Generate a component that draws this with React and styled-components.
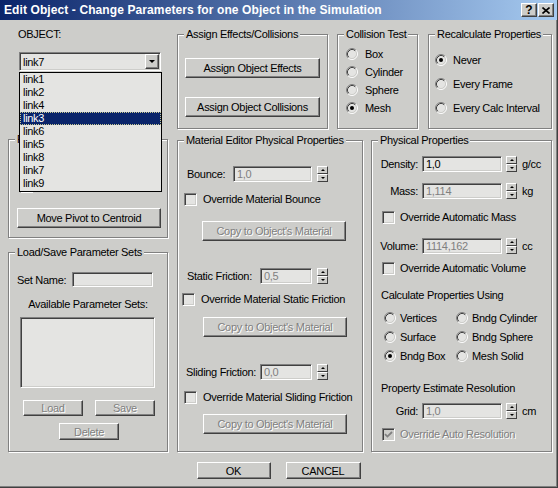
import React from 'react';
import styled, { createGlobalStyle } from 'styled-components';

const FACE = '#cdcdca';
const FIELD = '#e4e4e2';
const SHADOW = '#808080';
const DARK = '#404040';
const NAVY = '#0a246a';

const GlobalStyle = createGlobalStyle`
  html, body { margin: 0; padding: 0; background: ${FACE}; }
  body {
    font-family: "Liberation Sans", Arial, sans-serif;
    font-size: 11px;
    letter-spacing: -0.3px;
    color: #000;
  }
  * { box-sizing: border-box; }
`;

const Window = styled.div`
  width: 558px;
  height: 488px;
  background: ${FACE};
  border-right: 1px solid ${DARK};
  border-bottom: 1px solid ${DARK};
  box-shadow: inset -1px -1px ${SHADOW};
  display: flex;
  flex-direction: column;
  overflow: hidden;
`;

const TitleBar = styled.div`
  height: 20px;
  flex-shrink: 0;
  display: flex;
  align-items: center;
  padding: 0 3px 0 4px;
  background: linear-gradient(to right, ${NAVY}, #a6caf0);
`;

const Title = styled.div`
  flex: 1;
  color: #fff;
  font-weight: bold;
  font-size: 12px;
  letter-spacing: 0.1px;
  white-space: nowrap;
`;

const CaptionButtons = styled.div`
  display: flex;
  gap: 1px;
`;

const CaptionButton = styled.div`
  width: 16px;
  height: 14px;
  display: flex;
  align-items: center;
  justify-content: center;
  background: ${FACE};
  border: 1px solid;
  border-color: #fff ${DARK} ${DARK} #fff;
  box-shadow: inset -1px -1px ${SHADOW};
  font-weight: bold;
  font-size: 12px;
  letter-spacing: 0;
`;

const Body = styled.div`
  display: grid;
  grid-template-columns: 160px 375px;
  column-gap: 9px;
  padding: 8px 0 0 8px;
`;

const Column = styled.div`
  display: flex;
  flex-direction: column;
  align-items: flex-start;
`;

const GroupRow = styled.div`
  display: flex;
  align-items: flex-start;
  height: ${p => p.$h}px;
  margin-top: ${p => p.$mt || 0}px;
`;

const Group = styled.fieldset`
  margin: ${p => p.$mt || 0}px 0 0 ${p => p.$ml || 0}px;
  padding: 0;
  width: ${p => (p.$w ? `${p.$w}px` : '100%')};
  height: ${p => p.$h}px;
  min-width: 0;
  border: 1px solid ${SHADOW};
  box-shadow: inset 1px 1px #fff, 1px 1px #fff;
  display: flex;
  flex-direction: column;
  align-items: flex-start;
`;

const Legend = styled.legend`
  margin-left: 6px;
  padding: 0 2px;
  line-height: 13px;
  background: ${FACE};
  white-space: nowrap;
`;

const Text = styled.span`
  display: block;
  line-height: 13px;
  margin: ${p => p.$mt || 0}px 0 0 ${p => p.$ml || 0}px;
  white-space: nowrap;
  align-self: ${p => (p.$center ? 'stretch' : 'auto')};
  text-align: ${p => (p.$center ? 'center' : 'left')};
  ${p => p.$disabled && `color: ${SHADOW}; text-shadow: 1px 1px #fff;`}
`;

const Row = styled.div`
  display: flex;
  align-items: center;
  height: ${p => p.$h || 13}px;
  margin: ${p => p.$mt || 0}px 0 0 ${p => p.$ml || 0}px;
  gap: ${p => p.$gap || 0}px;
  white-space: nowrap;
`;

const FieldLabel = styled.span`
  flex-shrink: 0;
  width: ${p => p.$w}px;
  text-align: ${p => (p.$right ? 'right' : 'left')};
  white-space: nowrap;
`;

const Sunken = styled.div`
  flex-shrink: 0;
  width: ${p => p.$w}px;
  height: ${p => p.$h || 16}px;
  margin: ${p => p.$mt || 0}px 0 0 ${p => p.$ml || 0}px;
  background: ${FIELD};
  border: 1px solid;
  border-color: ${SHADOW} #fff #fff ${SHADOW};
  box-shadow: inset 1px 1px ${DARK}, inset -1px -1px ${FACE};
`;

const Field = styled(Sunken)`
  padding-left: 3px;
  line-height: ${p => (p.$h || 16) - 2}px;
  color: ${p => (p.$disabled ? SHADOW : '#000')};
  overflow: hidden;
  white-space: nowrap;
`;

const Spin = styled.div`
  flex-shrink: 0;
  display: flex;
  flex-direction: column;
  width: 11px;
  height: 16px;
  margin-left: ${p => p.$ml || 0}px;
`;

const SpinHalf = styled.div`
  flex: 1;
  display: flex;
  align-items: center;
  justify-content: center;
  background: ${FACE};
  border: 1px solid;
  border-color: #fff ${DARK} ${DARK} #fff;
`;

const Arrow = styled.span`
  width: 0;
  height: 0;
  border-left: ${p => p.$size || 3}px solid transparent;
  border-right: ${p => p.$size || 3}px solid transparent;
  ${p => (p.$up ? 'border-bottom' : 'border-top')}: ${p => p.$size || 3}px solid #000;
`;

const Button = styled.button`
  display: block;
  flex-shrink: 0;
  width: ${p => p.$w}px;
  height: ${p => p.$h || 20}px;
  margin: ${p => p.$mt || 0}px 0 0 ${p => p.$ml || 0}px;
  padding: 0;
  font: inherit;
  letter-spacing: inherit;
  color: #000;
  background: ${FACE};
  border: 1px solid;
  border-color: #fff ${DARK} ${DARK} #fff;
  box-shadow: inset -1px -1px ${SHADOW};
  white-space: nowrap;

  &:disabled {
    color: ${SHADOW};
    text-shadow: 1px 1px #fff;
  }
`;

const CheckBox = styled.span`
  flex-shrink: 0;
  display: flex;
  align-items: center;
  justify-content: center;
  width: 13px;
  height: 13px;
  background: ${p => (p.$disabled ? FACE : FIELD)};
  border: 1px solid;
  border-color: ${SHADOW} #fff #fff ${SHADOW};
  box-shadow: inset 1px 1px ${DARK}, inset -1px -1px ${FACE};
`;

const RadioIcon = styled.svg`
  flex-shrink: 0;
  display: block;
`;

const RadioGrid = styled.div`
  display: grid;
  grid-template-columns: 72px auto;
  grid-auto-rows: 13px;
  row-gap: 6px;
  margin: ${p => p.$mt || 0}px 0 0 ${p => p.$ml || 0}px;
`;

const ComboWrap = styled.div`
  position: relative;
  width: 142px;
  height: 19px;
  margin: 11px 0 0 11px;
`;

const Combo = styled(Sunken)`
  display: flex;
  align-items: center;
  padding-left: 3px;
`;

const ComboButton = styled.div`
  margin-left: auto;
  margin-right: 1px;
  width: 14px;
  height: 15px;
  display: flex;
  align-items: center;
  justify-content: center;
  background: ${FACE};
  border: 1px solid;
  border-color: #fff ${DARK} ${DARK} #fff;
  box-shadow: inset -1px -1px ${SHADOW};
`;

const DropList = styled.div`
  position: absolute;
  top: 20px;
  left: 0;
  z-index: 5;
  width: 143px;
  padding-bottom: 1px;
  background: ${FIELD};
  border: 1px solid #000;
`;

const DropItem = styled.div`
  height: 13px;
  line-height: 13px;
  padding-left: 3px;
  ${p =>
    p.$active &&
    `background: ${NAVY}; color: #fff; outline: 1px dotted #c8c890; outline-offset: -1px;`}
`;

const Footer = styled.div`
  display: flex;
  justify-content: center;
  gap: 15px;
  margin-top: 10px;
`;

const Radio = ({ checked }) => (
  <RadioIcon width="12" height="12" viewBox="0 0 12 12">
    <circle cx="6" cy="6" r="4.5" fill={FIELD} />
    <path d="M2.11 9.89A5.5 5.5 0 0 1 9.89 2.11" stroke={SHADOW} fill="none" />
    <path d="M9.89 2.11A5.5 5.5 0 0 1 2.11 9.89" stroke="#fff" fill="none" />
    <path d="M2.82 9.18A4.5 4.5 0 0 1 9.18 2.82" stroke={DARK} fill="none" />
    <path d="M9.18 2.82A4.5 4.5 0 0 1 2.82 9.18" stroke={FACE} fill="none" />
    {checked && <circle cx="6" cy="6" r="2" fill="#000" />}
  </RadioIcon>
);

const RadioOption = ({ checked, label, gap = 6, mt, ml }) => (
  <Row $gap={gap} $mt={mt} $ml={ml}>
    <Radio checked={checked} />
    <span>{label}</span>
  </Row>
);

const Check = ({ checked, disabled, label, gap = 6, mt, ml }) => (
  <Row $gap={gap} $mt={mt} $ml={ml}>
    <CheckBox $disabled={disabled}>
      {checked && (
        <svg width="9" height="9" viewBox="0 0 9 9">
          <path d="M1 4.2l2.4 2.4L8 2" stroke={disabled ? SHADOW : '#000'} strokeWidth="1.8" fill="none" />
        </svg>
      )}
    </CheckBox>
    <Text $disabled={disabled}>{label}</Text>
  </Row>
);

const Spinner = ({ ml }) => (
  <Spin $ml={ml}>
    <SpinHalf><Arrow $up $size={2.5} /></SpinHalf>
    <SpinHalf><Arrow $size={2.5} /></SpinHalf>
  </Spin>
);

const NumberRow = ({ label, labelW, right, value, disabled, w, unit, mt, ml, spinGap = 5 }) => (
  <Row $h={16} $mt={mt} $ml={ml}>
    <FieldLabel $w={labelW} $right={right}>{label}</FieldLabel>
    <Field $w={w} $ml={right ? 4 : 0} $disabled={disabled}>{value}</Field>
    <Spinner ml={spinGap} />
    {unit && <Text $ml={5}>{unit}</Text>}
  </Row>
);

const links = ['link1', 'link2', 'link4', 'link3', 'link6', 'link5', 'link8', 'link7', 'link9'];

export default function App() {
  return (
    <>
      <GlobalStyle />
      <Window>
        <TitleBar>
          <Title>Edit Object - Change Parameters for one Object in the Simulation</Title>
          <CaptionButtons>
            <CaptionButton>?</CaptionButton>
            <CaptionButton>
              <svg width="8" height="7" viewBox="0 0 8 7">
                <path d="M0.5 0.5l7 6M7.5 0.5l-7 6" stroke="#000" strokeWidth="1.6" />
              </svg>
            </CaptionButton>
          </CaptionButtons>
        </TitleBar>

        <Body>
          <Column>
            <Text $ml={10}>OBJECT:</Text>
            <ComboWrap>
              <Combo $w={142} $h={19}>
                link7
                <ComboButton><Arrow $size={3.5} /></ComboButton>
              </Combo>
              <DropList>
                {links.map(l => (
                  <DropItem key={l} $active={l === 'link3'}>{l}</DropItem>
                ))}
              </DropList>
            </ComboWrap>

            <Group $mt={62} $h={105}>
              <Legend>Pivot Point</Legend>
              <Check mt={34} ml={11} gap={5} label="Relocate Pivot by Using" />
              <Button $mt={15} $ml={8} $w={144}>Move Pivot to Centroid</Button>
            </Group>

            <Group $mt={8} $h={206}>
              <Legend>Load/Save Parameter Sets</Legend>
              <Row $h={15} $mt={13} $ml={8}>
                <FieldLabel $w={55}>Set Name:</FieldLabel>
                <Sunken $w={81} $h={15} />
              </Row>
              <Text $mt={11} $center>Available Parameter Sets:</Text>
              <Sunken $w={135} $h={71} $mt={6} $ml={11} />
              <Row $h={16} $mt={12}>
                <Button disabled $w={60} $h={16} $ml={14}>Load</Button>
                <Button disabled $w={60} $h={16} $ml={12}>Save</Button>
              </Row>
              <Button disabled $w={60} $h={17} $mt={7} $ml={50}>Delete</Button>
            </Group>
          </Column>

          <Column>
            <GroupRow $h={101}>
              <Group $w={151} $h={101}>
                <Legend>Assign Effects/Collisions</Legend>
                <Button $mt={17} $ml={7} $w={135}>Assign Object Effects</Button>
                <Button $mt={19} $ml={7} $w={135}>Assign Object Collisions</Button>
              </Group>
              <Group $w={81} $h={101} $ml={9}>
                <Legend>Collision Test</Legend>
                <RadioOption mt={6} ml={8} gap={7} label="Box" />
                <RadioOption mt={5} ml={8} gap={7} label="Cylinder" />
                <RadioOption mt={5} ml={8} gap={7} label="Sphere" />
                <RadioOption mt={5} ml={8} gap={7} label="Mesh" checked />
              </Group>
              <Group $w={124} $h={101} $ml={10}>
                <Legend>Recalculate Properties</Legend>
                <RadioOption mt={12} ml={6} label="Never" checked />
                <RadioOption mt={11} ml={6} label="Every Frame" />
                <RadioOption mt={11} ml={6} label="Every Calc Interval" />
              </Group>
            </GroupRow>

            <GroupRow $h={318} $mt={5}>
              <Group $w={186} $h={318}>
                <Legend>Material Editor Physical Properties</Legend>
                <NumberRow mt={19} ml={9} labelW={46} label="Bounce:" value="1,0" disabled w={79} />
                <Check mt={11} ml={6} label="Override Material Bounce" />
                <Button disabled $mt={15} $ml={24} $w={144}>Copy to Object's Material</Button>
                <NumberRow mt={27} ml={9} labelW={73} label="Static Friction:" value="0,5" disabled w={52} />
                <Check mt={9} ml={4} label="Override Material Static Friction" />
                <Button disabled $mt={11} $ml={25} $w={144}>Copy to Object's Material</Button>
                <NumberRow mt={27} ml={8} labelW={74} label="Sliding Friction:" value="0,0" disabled w={52} />
                <Check mt={11} ml={6} label="Override Material Sliding Friction" />
                <Button disabled $mt={10} $ml={25} $w={144}>Copy to Object's Material</Button>
              </Group>

              <Group $w={181} $h={318} $ml={8}>
                <Legend>Physical Properties</Legend>
                <NumberRow mt={9} labelW={46} right label="Density:" value="1,0" w={80} unit="g/cc" spinGap={4} />
                <NumberRow mt={11} labelW={46} right label="Mass:" value="1,114" disabled w={80} unit="kg" spinGap={4} />
                <Check mt={12} ml={10} gap={5} label="Override Automatic Mass" />
                <NumberRow mt={14} labelW={46} right label="Volume:" value="1114,162" disabled w={80} unit="cc" spinGap={4} />
                <Check mt={8} ml={10} gap={5} label="Override Automatic Volume" />
                <Text $mt={14} $ml={9}>Calculate Properties Using</Text>
                <RadioGrid $mt={9} $ml={12}>
                  <RadioOption gap={4} label="Vertices" />
                  <RadioOption gap={4} label="Bndg Cylinder" />
                  <RadioOption gap={4} label="Surface" />
                  <RadioOption gap={4} label="Bndg Sphere" />
                  <RadioOption gap={4} label="Bndg Box" checked />
                  <RadioOption gap={4} label="Mesh Solid" />
                </RadioGrid>
                <Text $mt={20} $ml={9}>Property Estimate Resolution</Text>
                <NumberRow mt={8} labelW={46} right label="Grid:" value="1,0" disabled w={80} unit="cm" spinGap={4} />
                <Check mt={9} ml={10} gap={5} checked disabled label="Override Auto Resolution" />
              </Group>
            </GroupRow>
          </Column>
        </Body>

        <Footer>
          <Button $w={74} $h={17}>OK</Button>
          <Button $w={75} $h={17}>CANCEL</Button>
        </Footer>
      </Window>
    </>
  );
}
